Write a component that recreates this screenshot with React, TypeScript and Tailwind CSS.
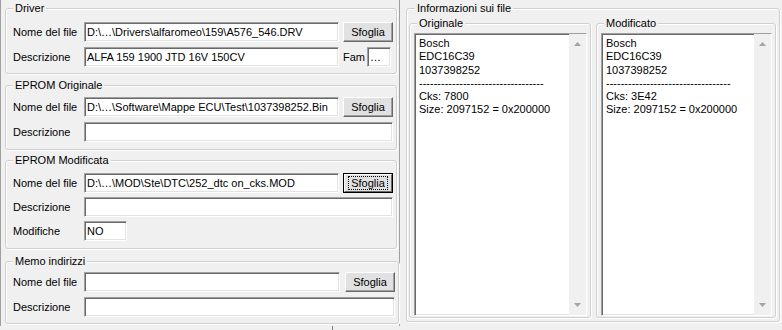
import type { ReactNode } from "react"

const sunken =
  "border border-t-[#a0a0a0] border-l-[#a0a0a0] border-r-white border-b-white shadow-[inset_1px_1px_0_#696969,inset_-1px_-1px_0_#e3e3e3] bg-white"

const Group = ({
  title,
  className = "",
  legendClass = "",
  children,
}: {
  title: string
  className?: string
  legendClass?: string
  children: ReactNode
}) => (
  <fieldset
    className={`border border-[#d0d0d0] rounded-[3px] shadow-[inset_1px_1px_0_#fff,1px_1px_0_#fff] ${className}`}
  >
    <legend className={`px-[2px] leading-[13px] bg-[#f0f0f0] ${legendClass}`}>{title}</legend>
    {children}
  </fieldset>
)

const TextBox = ({ value = "", className = "" }: { value?: string; className?: string }) => (
  <div className={`${sunken} h-[20px] pl-[2px] flex items-center whitespace-nowrap overflow-hidden ${className}`}>
    {value}
  </div>
)

const Button = ({ focused = false }: { focused?: boolean }) =>
  focused ? (
    <div className="w-[50px] h-[20px] border border-black">
      <div className="h-full bg-[#e1e1e1] border border-t-white border-l-white border-r-[#696969] border-b-[#696969] flex items-center justify-center">
        <span className="border border-dotted border-black px-[2px] leading-[12px]">Sfoglia</span>
      </div>
    </div>
  ) : (
    <div className="w-[50px] h-[20px] bg-[#e1e1e1] border border-t-white border-l-white border-r-[#696969] border-b-[#696969] shadow-[inset_-1px_-1px_0_#a0a0a0] flex items-center justify-center">
      Sfoglia
    </div>
  )

const Row = ({ label, children }: { label: string; children: ReactNode }) => (
  <div className="flex items-center h-[20px]">
    <span className="w-[71px] shrink-0">{label}</span>
    {children}
  </div>
)

const InfoBox = ({ title, cks, className = "" }: { title: string; cks: string; className?: string }) => (
  <Group title={title} className={`h-[301px] pl-[4px] pr-[3px] pt-[3px] ${className}`} legendClass="ml-[3px]">
    <div className={`${sunken} h-[283px] flex`}>
      <div className="flex-1 pl-[4px] pt-[3px] leading-[13.3px] whitespace-nowrap">
        <div>Bosch</div>
        <div>EDC16C39</div>
        <div>1037398252</div>
        <div>----------------------------------</div>
        <div>Cks: {cks}</div>
        <div>Size: 2097152 = 0x200000</div>
      </div>
      <div className="w-[17px] bg-[#f0f0f0] flex flex-col items-center justify-between pt-[8px] pb-[8px]">
        <svg width="7" height="4" viewBox="0 0 7 4">
          <path d="M3.5 0 L7 4 L0 4 Z" fill="#a3a3a3" />
        </svg>
        <svg width="7" height="4" viewBox="0 0 7 4">
          <path d="M0 0 L7 0 L3.5 4 Z" fill="#a3a3a3" />
        </svg>
      </div>
    </div>
  </Group>
)

export default function App() {
  return (
    <div className="w-[782px] h-[330px] bg-[#f0f0f0] flex flex-col overflow-hidden font-['Liberation_Sans',Arial,sans-serif] text-[11px] text-black">
      <div className="flex h-[326px]">
        {/* Left: file fields */}
        <div className="w-[400px] border-l border-r border-[#a0a0a0] pl-[4px] pr-[2px] pt-[2px] flex flex-col">
          <Group title="Driver" className="h-[72px] pl-[7px] pr-[3px] pt-[7px]">
            <div className="flex flex-col gap-[5px]">
              <Row label="Nome del file">
                <TextBox value="D:\…\Drivers\alfaromeo\159\A576_546.DRV" className="w-[255px]" />
                <div className="ml-[4px]">
                  <Button />
                </div>
              </Row>
              <Row label="Descrizione">
                <TextBox value="ALFA 159 1900 JTD 16V 150CV" className="w-[255px]" />
                <span className="ml-[4px] w-[24px]">Fam</span>
                <TextBox value="…" className="w-[24px]" />
              </Row>
            </div>
          </Group>

          <Group title="EPROM Originale" className="mt-[5px] h-[71px] pl-[7px] pr-[3px] pt-[5px]">
            <div className="flex flex-col gap-[5px]">
              <Row label="Nome del file">
                <TextBox value="D:\…\Software\Mappe ECU\Test\1037398252.Bin" className="w-[255px]" />
                <div className="ml-[4px]">
                  <Button />
                </div>
              </Row>
              <Row label="Descrizione">
                <TextBox className="flex-1" />
              </Row>
            </div>
          </Group>

          <Group title="EPROM Modificata" className="mt-[4px] h-[95px] pl-[7px] pr-[3px] pt-[6px]">
            <div className="flex flex-col gap-[4px]">
              <Row label="Nome del file">
                <TextBox value="D:\…\MOD\Ste\DTC\252_dtc on_cks.MOD" className="w-[255px]" />
                <div className="ml-[4px]">
                  <Button focused />
                </div>
              </Row>
              <Row label="Descrizione">
                <TextBox className="flex-1" />
              </Row>
              <Row label="Modifiche">
                <TextBox value="NO" className="w-[43px]" />
              </Row>
            </div>
          </Group>

          <Group title="Memo indirizzi" className="mt-[6px] h-[69px] pl-[7px] pr-[3px] pt-[4px]">
            <div className="flex flex-col gap-[5px]">
              <Row label="Nome del file">
                <TextBox className="w-[256px]" />
                <div className="ml-[5px]">
                  <Button />
                </div>
              </Row>
              <Row label="Descrizione">
                <TextBox className="flex-1" />
              </Row>
            </div>
          </Group>
        </div>

        {/* Right: file info */}
        <div className="flex-1 pl-[6px] pr-[2px] pt-[2px]">
          <Group title="Informazioni sui file" className="h-[320px] pl-[2px] pr-[2px] pt-[2px]" legendClass="ml-[6px]">
            <div className="flex gap-[5px]">
              <InfoBox title="Originale" cks="7800" className="w-[182px]" />
              <InfoBox title="Modificato" cks="3E42" className="w-[180px]" />
            </div>
          </Group>
        </div>
      </div>
      <div className="flex-1">
        <div className="ml-[332px] w-px h-full bg-[#808080]" />
      </div>
    </div>
  )
}
